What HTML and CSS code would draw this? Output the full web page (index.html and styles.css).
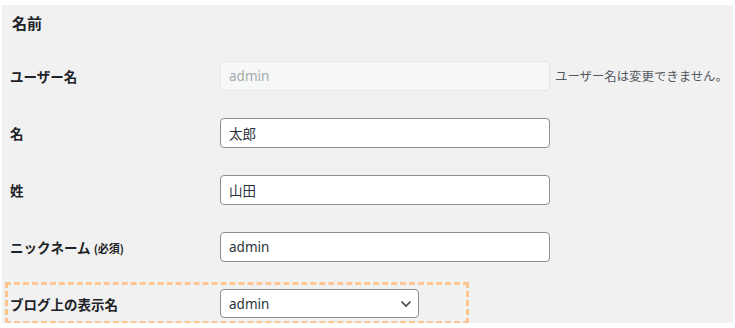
FILE: index.html
```html
<!DOCTYPE html>
<html lang="ja">
<head>
  <meta charset="UTF-8">
  <meta name="viewport" content="width=device-width, initial-scale=1.0">
  <title>プロフィール</title>
  <link rel="stylesheet" href="styles.css">
</head>
<body>

<div class="panel">
  <h2>名前</h2>

  <div class="row">
    <label for="user_login">ユーザー名</label>
    <input type="text" id="user_login" value="admin" disabled>
    <span class="description">ユーザー名は変更できません。</span>
  </div>

  <div class="row">
    <label for="first_name">名</label>
    <input type="text" id="first_name" value="太郎">
  </div>

  <div class="row">
    <label for="last_name">姓</label>
    <input type="text" id="last_name" value="山田">
  </div>

  <div class="row">
    <label for="nickname">ニックネーム <small>(必須)</small></label>
    <input type="text" id="nickname" value="admin">
  </div>

  <div class="row highlight">
    <label for="display_name">ブログ上の表示名</label>
    <div class="select">
      <select id="display_name">
        <option>admin</option>
        <option>太郎</option>
        <option>山田</option>
      </select>
      <svg width="12" height="8" viewBox="0 0 12 8"><path d="M1.5 1.5 L6 6 L10.5 1.5" fill="none" stroke="#3c434a" stroke-width="1.6"/></svg>
    </div>
  </div>
</div>

</body>
</html>
```

FILE: styles.css
```css
* { margin: 0; padding: 0; box-sizing: border-box; }
body {
  background: #fff;
  font-family: 'Noto Sans CJK JP', 'Noto Sans', sans-serif;
  color: #1d2327;
}

.panel {
  margin: 5px 0 0 2px;
  width: 731px;
  height: 318px;
  background: #f1f1f1;
  padding-left: 8px;
  overflow: hidden;
}

h2 {
  font-size: 15px;
  font-weight: bold;
  height: 42px;
  line-height: 36px;
  padding-left: 2px;
}

.row {
  position: relative;
  height: 57px;
  display: flex;
  align-items: center;
}
.row label {
  flex: none;
  width: 210px;
  font-size: 13.5px;
  font-weight: bold;
}
.row label small { font-size: 11px; }

.row input {
  flex: none;
  width: 330px;
  height: 30px;
  padding: 0 8px;
  border: 1px solid #8c8f94;
  border-radius: 4px;
  background: #fff;
  font-family: 'Noto Sans', 'Noto Sans CJK JP', sans-serif;
  font-size: 13.5px;
  color: #2c3338;
}
.row input:disabled {
  background: #f6f7f7;
  border-color: #e4e5e6;
  color: #a7aaad;
}

.description {
  margin-left: 5px;
  white-space: nowrap;
  font-size: 12.4px;
  color: #50575e;
}

.select {
  flex: none;
  position: relative;
  z-index: 1;
  width: 199px;
  height: 29px;
}
.select select {
  appearance: none;
  width: 100%;
  height: 100%;
  padding: 0 8px;
  border: 1px solid #8c8f94;
  border-radius: 4px;
  background: #fff;
  font-family: 'Noto Sans', sans-serif;
  font-size: 13.5px;
  color: #2c3338;
}
.select svg {
  position: absolute;
  right: 7px;
  top: 11px;
}

.highlight::before {
  content: '';
  position: absolute;
  left: -5px;
  top: 7px;
  width: 458px;
  height: 36px;
  border: 3px dashed #fdc494;
}
```
